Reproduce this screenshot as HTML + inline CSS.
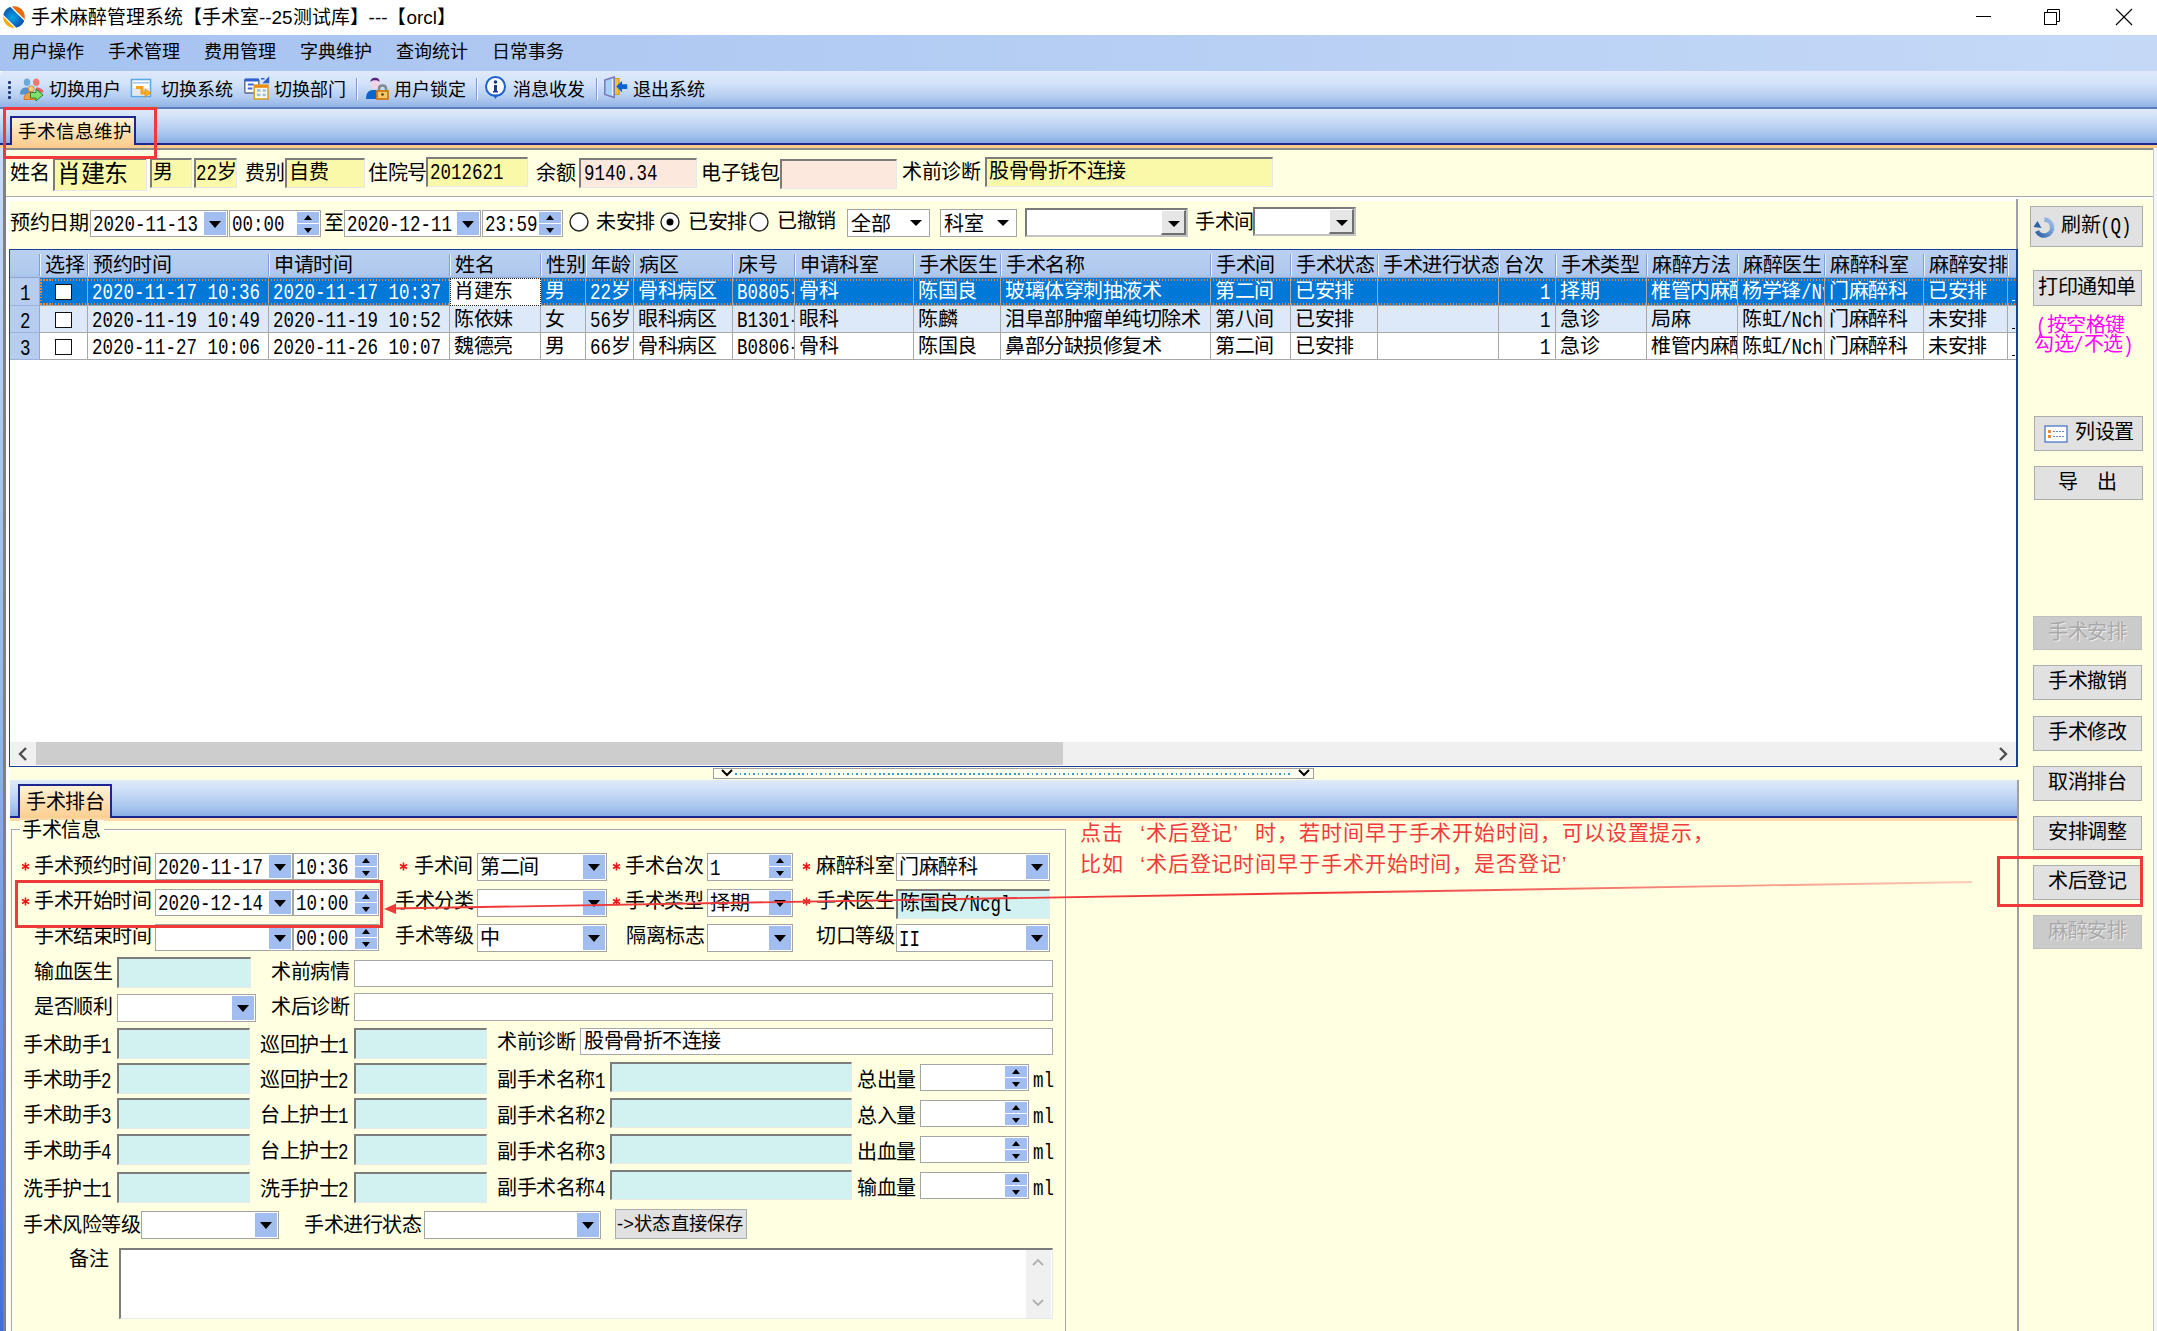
<!DOCTYPE html><html lang="zh-CN"><head><meta charset="utf-8"><style>
*{box-sizing:border-box}
html,body{margin:0;padding:0;width:2157px;height:1331px;overflow:hidden;background:#ffffe1;position:relative}
body{font-family:"Liberation Sans",sans-serif;color:#000}
div{position:absolute}
.t{font-size:20px;letter-spacing:-0.5px;line-height:20px;white-space:nowrap}
.y{line-height:22px;white-space:nowrap;font-family:"Liberation Sans",sans-serif}
b.m{display:inline-block;font-weight:normal;position:relative;height:20px;vertical-align:top;overflow:visible}
b.m i{font-style:normal;font-family:"Liberation Mono",monospace;font-size:22px;letter-spacing:0;position:absolute;left:0;top:3px;transform-origin:0 0;white-space:nowrap}
.g b.m i{top:3px}
.sk{background:#fff;border-top:2px solid #808080;border-left:2px solid #808080;border-bottom:1px solid #e3e3e3;border-right:1px solid #e3e3e3}
.fl{background:#fff;border:1px solid #a5a5a5}
.dd{background:#a2bdf0}
.tri{width:0;height:0;border-left:6px solid transparent;border-right:6px solid transparent;border-top:7px solid #000}
.btn{background:#e1e1e1;border:1px solid #adadad}
.dis{background:#cccccc;border:1px solid #bfbfbf;color:#a3a3a3}
.red{border:3px solid #f03c3c}
</style></head><body><div style="left:0px;top:0px;width:2157px;height:35px;background:#fff"></div>
<svg style="position:absolute;left:3px;top:6px" width="22" height="22" viewBox="0 0 22 22">
<defs><clipPath id="cc"><circle cx="11" cy="11" r="10.8"/></clipPath><radialGradient id="bl" cx="0.45" cy="0.5" r="0.6"><stop offset="0" stop-color="#06a6e6"/><stop offset="1" stop-color="#0a5cb8"/></radialGradient></defs>
<g clip-path="url(#cc)">
<rect x="0" y="0" width="22" height="22" fill="#fff"/>
<path d="M8 -1 L23 -1 L23 23Z" fill="#ec6a0c"/>
<path d="M-1 8 L-1 23 L16 23Z" fill="#f4ae12"/>
<path d="M2 3 L19 20" stroke="#fff" stroke-width="13"/>
<path d="M2.5 3.5 L18.5 19.5" stroke="url(#bl)" stroke-width="10.5" stroke-linecap="round"/>
</g></svg>
<div class="y" style="left:31px;top:7px;font-size:18.9px;line-height:22px">手术麻醉管理系统【手术室--25测试库】---【orcl】</div>
<div style="left:1976px;top:16px;width:15px;height:1px;background:#000"></div>
<svg style="position:absolute;left:2043px;top:8px" width="20" height="18" viewBox="0 0 20 18"><rect x="1.5" y="4.5" width="12" height="12" fill="none" stroke="#000" stroke-width="1"/><path d="M4.5 4.5 V1.5 H16.5 V13.5 H13.5" fill="none" stroke="#000" stroke-width="1"/></svg>
<svg style="position:absolute;left:2114px;top:7px" width="20" height="20" viewBox="0 0 20 20"><path d="M2 2 L18 18 M18 2 L2 18" stroke="#000" stroke-width="1.1"/></svg>
<div style="left:0px;top:35px;width:2157px;height:36px;background:linear-gradient(90deg,#a6c2f0 0%,#b3ccf3 40%,#c5d9f7 100%)"></div>
<div class="y" style="left:12px;top:41px;font-size:18px;">用户操作</div>
<div class="y" style="left:108px;top:41px;font-size:18px;">手术管理</div>
<div class="y" style="left:204px;top:41px;font-size:18px;">费用管理</div>
<div class="y" style="left:300px;top:41px;font-size:18px;">字典维护</div>
<div class="y" style="left:396px;top:41px;font-size:18px;">查询统计</div>
<div class="y" style="left:492px;top:41px;font-size:18px;">日常事务</div>
<div style="left:0px;top:71px;width:2157px;height:37px;background:linear-gradient(180deg,#dfeafb 0%,#d2e2f9 35%,#b4cdf1 70%,#8eb0e3 100%);border-top-left-radius:4px"></div>
<div style="left:0px;top:107px;width:2157px;height:2px;background:#5a7ec0"></div>
<div style="left:8px;top:81px;width:3px;height:3px;background:#243a78;border-radius:1px"></div>
<div style="left:8px;top:86px;width:3px;height:3px;background:#243a78;border-radius:1px"></div>
<div style="left:8px;top:91px;width:3px;height:3px;background:#243a78;border-radius:1px"></div>
<div style="left:8px;top:96px;width:3px;height:3px;background:#243a78;border-radius:1px"></div>
<svg style="position:absolute;left:14px;top:72px" width="40" height="32" viewBox="0 0 40 32"><path d="M6 22.5 C6 17 9 15.5 13 15.5 C16 15.5 17 17 17 19 L17 22.5Z" fill="#4f95cf"/><ellipse cx="13" cy="10.2" rx="3.2" ry="3.8" fill="#6aaad8"/><path d="M22 15.5 C26 15.5 29.5 17 29.5 20.5 L22 20.5Z" fill="#e86060"/><ellipse cx="22.2" cy="10.2" rx="3.2" ry="3.8" fill="#f07a70"/><path d="M10 27.5 C10 22 13 20.5 17.3 20.5 C21 20.5 23 22 23 27.5Z" fill="#f0a040" stroke="#d86a18" stroke-width="0.8"/><circle cx="17.3" cy="16.8" r="2.9" fill="#f8d080" stroke="#e08028" stroke-width="0.9"/><path d="M16.5 20.5 H22 V17 L29 23 L22 29 V26 H16.5Z" fill="#7ee070" stroke="#1e7a1e" stroke-width="0.9"/></svg>
<div class="y" style="left:49px;top:79px;font-size:18px;">切换用户</div>
<svg style="position:absolute;left:127px;top:72px" width="40" height="32" viewBox="0 0 40 32"><rect x="4.5" y="7.5" width="19" height="17" fill="#fff" stroke="#5aaae8" stroke-width="1.6"/><rect x="6" y="10" width="16" height="1.5" fill="#9cc8f0"/><rect x="6" y="16" width="16" height="7" fill="#e8e8ec"/><path d="M9 15.5 H15 V21 H19" fill="none" stroke="#f5a21b" stroke-width="3"/><path d="M18 17 L24 21 L18 25Z" fill="#f5b21b" stroke="#e07a10" stroke-width="0.6"/></svg>
<div class="y" style="left:161px;top:79px;font-size:18px;">切换系统</div>
<svg style="position:absolute;left:240px;top:72px" width="40" height="32" viewBox="0 0 40 32"><rect x="4.8" y="7.5" width="14" height="13.5" fill="#fff" stroke="#5a6a8a" stroke-width="1.4" rx="1"/><rect x="4.5" y="6.6" width="14.6" height="3" fill="#2f62d0" rx="1"/><rect x="7.8" y="11.5" width="6" height="2" fill="#3a6ad8"/><rect x="7.8" y="15.5" width="4.5" height="2" fill="#3a6ad8"/><path d="M21 6.8 H24.5 M28.5 6 L28.5 10.5 L24 10.5Z" stroke="#3060d0" stroke-width="1.4" fill="#3060d0"/><rect x="14.2" y="13.2" width="13.8" height="13.8" fill="#fffbe8" stroke="#d4a020" stroke-width="1.5"/><rect x="14.2" y="12.8" width="13.8" height="3" fill="#f08a10"/><rect x="16.8" y="17.2" width="3.8" height="2.6" fill="#9cc0e0"/><rect x="22.6" y="17.2" width="3.2" height="2.6" fill="#9cc0e0"/><rect x="16.8" y="21.6" width="3.8" height="2.6" fill="#9cc0e0"/><rect x="22.6" y="21.6" width="3.2" height="2.6" fill="#9cc0e0"/></svg>
<div class="y" style="left:274px;top:79px;font-size:18px;">切换部门</div>
<svg style="position:absolute;left:362px;top:72px" width="40" height="32" viewBox="0 0 40 32"><ellipse cx="13" cy="12" rx="4.3" ry="5.3" fill="#f0d4e8"/><path d="M8.5 10 C8 5 18 4 17.5 10 C16 7.5 10 7.5 8.5 10Z" fill="#5a2080"/><path d="M4 27 C4 19 8 18 12 18 L15 18 L15 27Z" fill="#0a66cc"/><path d="M17 18.5 V16.5 C17 12.5 24 12.5 24 16.5 V18.5" fill="none" stroke="#808890" stroke-width="2.4"/><rect x="15" y="19" width="11" height="8" fill="#f8c868" stroke="#d07810" stroke-width="1.8"/><circle cx="20.5" cy="22.5" r="1.3" fill="#4a3a20"/></svg>
<div class="y" style="left:394px;top:79px;font-size:18px;">用户锁定</div>
<svg style="position:absolute;left:480px;top:72px" width="40" height="32" viewBox="0 0 40 32"><circle cx="15.5" cy="14.5" r="9.5" fill="#fff" stroke="#1a62d0" stroke-width="2"/><path d="M12.5 22.5 L15.5 27 L18.5 22.5Z" fill="#1a62d0"/><circle cx="15.5" cy="10" r="1.8" fill="#1a3a90"/><rect x="14" y="13" width="3" height="7" fill="#1a3a90"/><rect x="13" y="19" width="5" height="1.5" fill="#1a3a90"/></svg>
<div class="y" style="left:513px;top:79px;font-size:18px;">消息收发</div>
<svg style="position:absolute;left:600px;top:72px" width="40" height="32" viewBox="0 0 40 32"><path d="M15 6.5 H19 V22.5 H15" fill="#f4c040" stroke="#d89a10" stroke-width="1.2"/><path d="M4.8 8 L14.2 5 V25.5 L4.8 22.5Z" fill="#a8d0fa" stroke="#7a78b8" stroke-width="1.5"/><path d="M12.5 7 V23.5" stroke="#f4f4ff" stroke-width="1.2"/><path d="M16.2 14.5 L22 9 V12.2 H27.2 V17 H22 V20.2Z" fill="#0a64d8"/></svg>
<div class="y" style="left:633px;top:79px;font-size:18px;">退出系统</div>
<div style="left:356px;top:78px;width:1px;height:22px;background:#7e9cc8"></div>
<div style="left:357px;top:78px;width:1px;height:22px;background:#f4f8fe"></div>
<div style="left:476px;top:78px;width:1px;height:22px;background:#7e9cc8"></div>
<div style="left:477px;top:78px;width:1px;height:22px;background:#f4f8fe"></div>
<div style="left:596px;top:78px;width:1px;height:22px;background:#7e9cc8"></div>
<div style="left:597px;top:78px;width:1px;height:22px;background:#f4f8fe"></div>
<div style="left:0px;top:109px;width:2157px;height:35px;background:linear-gradient(180deg,#dfeafa 0%,#d3e3f8 20%,#a9c6ee 70%,#86abe1 100%)"></div>
<div style="left:0px;top:143px;width:2157px;height:2px;background:#1c2590"></div>
<div style="left:0px;top:145px;width:2157px;height:3px;background:#fccb8e"></div>
<div style="left:4px;top:148px;width:2150px;height:2px;background:#8a8a8a"></div>
<div style="left:10px;top:116px;width:126px;height:29px;background:linear-gradient(180deg,#fff3d6 0%,#fedcaa 60%,#fccf90 100%);border:2px solid #1c2590;border-bottom:none"></div>
<div class="t" style="left:18px;top:122px;font-size:18.5px;letter-spacing:0">手术信息维护</div>
<div style="left:0px;top:148px;width:3px;height:1183px;background:linear-gradient(180deg,#c8dcf8 0%,#8fb4ec 50%,#3a72d2 100%)"></div>
<div style="left:3px;top:148px;width:3px;height:1183px;background:#808080"></div>
<div style="left:6px;top:197px;width:4px;height:1134px;background:#fff"></div>
<div style="left:2153px;top:148px;width:4px;height:1183px;background:#f4f6fa"></div>
<div style="left:2153px;top:148px;width:1px;height:1183px;background:#c8c8c8"></div>
<div style="left:6px;top:150px;width:2147px;height:46px;background:#ffffe1"></div>
<div style="left:6px;top:196px;width:2147px;height:1px;background:#a8a8a8"></div>
<div style="left:6px;top:197px;width:2147px;height:2px;background:#fff"></div>
<div style="left:6px;top:199px;width:2012px;height:2px;background:#fff"></div>
<div class="t" style="left:10px;top:163px;">姓名</div>
<div style="left:53px;top:158px;width:94px;height:33px;background:#f9f9a9;border-top:2px solid #7c7c7c;border-left:2px solid #7c7c7c;border-bottom:1px solid #e8e8e8;border-right:1px solid #e8e8e8"></div>
<div class="t" style="left:57px;top:161px;font-size:24px;letter-spacing:-0.5px;line-height:26px">肖建东</div>
<div style="left:150px;top:158px;width:42px;height:30px;background:#f9f9a9;border-top:2px solid #7c7c7c;border-left:2px solid #7c7c7c;border-bottom:1px solid #e8e8e8;border-right:1px solid #e8e8e8"></div>
<div class="t" style="left:153px;top:162px;">男</div>
<div style="left:194px;top:158px;width:43px;height:30px;background:#f9f9a9;border-top:2px solid #7c7c7c;border-left:2px solid #7c7c7c;border-bottom:1px solid #e8e8e8;border-right:1px solid #e8e8e8"></div>
<div class="t" style="left:196px;top:162px;letter-spacing:-1px"><b class="m" style="width:21.00px"><i style="transform:scaleX(0.795)">22</i></b>岁</div>
<div class="t" style="left:245px;top:163px;">费别</div>
<div style="left:285px;top:158px;width:80px;height:30px;background:#f9f9a9;border-top:2px solid #7c7c7c;border-left:2px solid #7c7c7c;border-bottom:1px solid #e8e8e8;border-right:1px solid #e8e8e8"></div>
<div class="t" style="left:289px;top:162px;">自费</div>
<div class="t" style="left:368px;top:163px;">住院号</div>
<div style="left:426px;top:157px;width:102px;height:30px;background:#f9f9a9;border-top:2px solid #7c7c7c;border-left:2px solid #7c7c7c;border-bottom:1px solid #e8e8e8;border-right:1px solid #e8e8e8"></div>
<div class="t" style="left:430px;top:161px;"><b class="m" style="width:73.50px"><i style="transform:scaleX(0.795)">2012621</i></b></div>
<div class="t" style="left:536px;top:163px;">余额</div>
<div style="left:579px;top:158px;width:118px;height:30px;background:#fde8de;border-top:2px solid #7c7c7c;border-left:2px solid #7c7c7c;border-bottom:1px solid #e8e8e8;border-right:1px solid #e8e8e8"></div>
<div class="t" style="left:584px;top:162px;"><b class="m" style="width:73.50px"><i style="transform:scaleX(0.795)">9140.34</i></b></div>
<div class="t" style="left:701px;top:163px;">电子钱包</div>
<div style="left:780px;top:159px;width:117px;height:30px;background:#fde8de;border-top:2px solid #7c7c7c;border-left:2px solid #7c7c7c;border-bottom:1px solid #e8e8e8;border-right:1px solid #e8e8e8"></div>
<div class="t" style="left:902px;top:162px;">术前诊断</div>
<div style="left:985px;top:157px;width:288px;height:30px;background:#f9f9a9;border-top:2px solid #7c7c7c;border-left:2px solid #7c7c7c;border-bottom:1px solid #e8e8e8;border-right:1px solid #e8e8e8"></div>
<div class="t" style="left:989px;top:161px;">股骨骨折不连接</div>
<div style="left:10px;top:201px;width:2007px;height:48px;background:#ffffe1"></div>
<div style="left:2016px;top:199px;width:2px;height:50px;background:#a0a0a0"></div>
<div class="t" style="left:10px;top:213px;">预约日期</div>
<div style="left:90px;top:210px;width:138px;height:27px;background:#fff;border:1px solid #a5a5a5"></div>
<div class="t" style="left:93px;top:213px;"><b class="m" style="width:105.00px"><i style="transform:scaleX(0.795)">2020-11-13</i></b></div>
<div style="left:204px;top:212px;width:22px;height:23px;background:#a2bdf0"></div>
<div style="left:209px;top:221px;width:12px;height:7px;"><div class="tri"></div></div>
<div style="left:229px;top:210px;width:92px;height:27px;background:#fff;border:1px solid #a5a5a5"></div>
<div class="t" style="left:232px;top:213px;"><b class="m" style="width:52.50px"><i style="transform:scaleX(0.795)">00:00</i></b></div>
<div style="left:297px;top:212px;width:22px;height:11px;background:#a2bdf0"></div>
<div style="left:297px;top:224px;width:22px;height:11px;background:#a2bdf0"></div>
<svg style="position:absolute;left:297px;top:212px" width="22" height="23"><path d="M7 8 L11 3 L15 8Z" fill="#000"/><path d="M7 16 L11 21 L15 16Z" fill="#000"/></svg>
<div class="t" style="left:324px;top:213px;">至</div>
<div style="left:344px;top:210px;width:137px;height:27px;background:#fff;border:1px solid #a5a5a5"></div>
<div class="t" style="left:347px;top:213px;"><b class="m" style="width:105.00px"><i style="transform:scaleX(0.795)">2020-12-11</i></b></div>
<div style="left:457px;top:212px;width:22px;height:23px;background:#a2bdf0"></div>
<div style="left:462px;top:221px;width:12px;height:7px;"><div class="tri"></div></div>
<div style="left:482px;top:210px;width:81px;height:27px;background:#fff;border:1px solid #a5a5a5"></div>
<div class="t" style="left:485px;top:213px;"><b class="m" style="width:52.50px"><i style="transform:scaleX(0.795)">23:59</i></b></div>
<div style="left:539px;top:212px;width:22px;height:11px;background:#a2bdf0"></div>
<div style="left:539px;top:224px;width:22px;height:11px;background:#a2bdf0"></div>
<svg style="position:absolute;left:539px;top:212px" width="22" height="23"><path d="M7 8 L11 3 L15 8Z" fill="#000"/><path d="M7 16 L11 21 L15 16Z" fill="#000"/></svg>
<svg style="position:absolute;left:568px;top:211px" width="22" height="22"><circle cx="11" cy="11" r="9" fill="#fff" stroke="#222" stroke-width="1.4"/></svg>
<div class="t" style="left:596px;top:212px;">未安排</div>
<svg style="position:absolute;left:659px;top:211px" width="22" height="22"><circle cx="11" cy="11" r="9" fill="#fff" stroke="#222" stroke-width="1.4"/><circle cx="11" cy="11" r="3.5" fill="#000"/></svg>
<div class="t" style="left:688px;top:212px;">已安排</div>
<svg style="position:absolute;left:748px;top:211px" width="22" height="22"><circle cx="11" cy="11" r="9" fill="#fff" stroke="#222" stroke-width="1.4"/></svg>
<div class="t" style="left:777px;top:211px;">已撤销</div>
<div style="left:847px;top:209px;width:83px;height:28px;background:#fff;border:1px solid #a5a5a5"></div>
<div class="t" style="left:851px;top:214px;">全部</div>
<svg style="position:absolute;left:909px;top:219px" width="14" height="8"><path d="M1 1 L13 1 L7 7Z" fill="#000"/></svg>
<div style="left:940px;top:209px;width:77px;height:28px;background:#fff;border:1px solid #a5a5a5"></div>
<div class="t" style="left:944px;top:214px;">科室</div>
<svg style="position:absolute;left:996px;top:219px" width="14" height="8"><path d="M1 1 L13 1 L7 7Z" fill="#000"/></svg>
<div style="left:1025px;top:208px;width:163px;height:29px;background:#fff;border-top:2px solid #7a7a7a;border-left:2px solid #7a7a7a;border-bottom:2px solid #c4c4c4;border-right:2px solid #c4c4c4"></div>
<div style="left:1161px;top:210px;width:25px;height:25px;background:#e6e6e6;border-top:1px solid #fff;border-left:1px solid #fff;border-right:2px solid #707070;border-bottom:2px solid #707070"></div>
<svg style="position:absolute;left:1167px;top:220px" width="14" height="8"><path d="M1 1 L13 1 L7 7Z" fill="#000"/></svg>
<div class="t" style="left:1195px;top:212px;">手术间</div>
<div style="left:1253px;top:207px;width:103px;height:29px;background:#fff;border-top:2px solid #7a7a7a;border-left:2px solid #7a7a7a;border-bottom:2px solid #c4c4c4;border-right:2px solid #c4c4c4"></div>
<div style="left:1329px;top:209px;width:25px;height:25px;background:#e6e6e6;border-top:1px solid #fff;border-left:1px solid #fff;border-right:2px solid #707070;border-bottom:2px solid #707070"></div>
<svg style="position:absolute;left:1335px;top:219px" width="14" height="8"><path d="M1 1 L13 1 L7 7Z" fill="#000"/></svg>
<div style="left:9px;top:249px;width:2009px;height:518px;background:#fff;border:1px solid #1b3d9c;border-right-width:2px;border-top-width:2px"></div>
<div style="left:10px;top:250px;width:2006px;height:28px;background:linear-gradient(180deg,#b9d0f0 0%,#b0c9ee 80%,#a6c0e8 100%)"></div>
<div style="left:10px;top:277px;width:2006px;height:1px;background:#8fa8d0"></div>
<div style="left:39px;top:254px;width:1px;height:22px;background:#7f9ed6"></div>
<div style="left:40px;top:254px;width:1px;height:22px;background:#eef4fd"></div>
<div style="left:87px;top:254px;width:1px;height:22px;background:#7f9ed6"></div>
<div style="left:88px;top:254px;width:1px;height:22px;background:#eef4fd"></div>
<div style="left:268px;top:254px;width:1px;height:22px;background:#7f9ed6"></div>
<div style="left:269px;top:254px;width:1px;height:22px;background:#eef4fd"></div>
<div style="left:449px;top:254px;width:1px;height:22px;background:#7f9ed6"></div>
<div style="left:450px;top:254px;width:1px;height:22px;background:#eef4fd"></div>
<div style="left:540px;top:254px;width:1px;height:22px;background:#7f9ed6"></div>
<div style="left:541px;top:254px;width:1px;height:22px;background:#eef4fd"></div>
<div style="left:585px;top:254px;width:1px;height:22px;background:#7f9ed6"></div>
<div style="left:586px;top:254px;width:1px;height:22px;background:#eef4fd"></div>
<div style="left:633px;top:254px;width:1px;height:22px;background:#7f9ed6"></div>
<div style="left:634px;top:254px;width:1px;height:22px;background:#eef4fd"></div>
<div style="left:732px;top:254px;width:1px;height:22px;background:#7f9ed6"></div>
<div style="left:733px;top:254px;width:1px;height:22px;background:#eef4fd"></div>
<div style="left:794px;top:254px;width:1px;height:22px;background:#7f9ed6"></div>
<div style="left:795px;top:254px;width:1px;height:22px;background:#eef4fd"></div>
<div style="left:913px;top:254px;width:1px;height:22px;background:#7f9ed6"></div>
<div style="left:914px;top:254px;width:1px;height:22px;background:#eef4fd"></div>
<div style="left:1000px;top:254px;width:1px;height:22px;background:#7f9ed6"></div>
<div style="left:1001px;top:254px;width:1px;height:22px;background:#eef4fd"></div>
<div style="left:1210px;top:254px;width:1px;height:22px;background:#7f9ed6"></div>
<div style="left:1211px;top:254px;width:1px;height:22px;background:#eef4fd"></div>
<div style="left:1290px;top:254px;width:1px;height:22px;background:#7f9ed6"></div>
<div style="left:1291px;top:254px;width:1px;height:22px;background:#eef4fd"></div>
<div style="left:1377px;top:254px;width:1px;height:22px;background:#7f9ed6"></div>
<div style="left:1378px;top:254px;width:1px;height:22px;background:#eef4fd"></div>
<div style="left:1498px;top:254px;width:1px;height:22px;background:#7f9ed6"></div>
<div style="left:1499px;top:254px;width:1px;height:22px;background:#eef4fd"></div>
<div style="left:1555px;top:254px;width:1px;height:22px;background:#7f9ed6"></div>
<div style="left:1556px;top:254px;width:1px;height:22px;background:#eef4fd"></div>
<div style="left:1646px;top:254px;width:1px;height:22px;background:#7f9ed6"></div>
<div style="left:1647px;top:254px;width:1px;height:22px;background:#eef4fd"></div>
<div style="left:1737px;top:254px;width:1px;height:22px;background:#7f9ed6"></div>
<div style="left:1738px;top:254px;width:1px;height:22px;background:#eef4fd"></div>
<div style="left:1824px;top:254px;width:1px;height:22px;background:#7f9ed6"></div>
<div style="left:1825px;top:254px;width:1px;height:22px;background:#eef4fd"></div>
<div style="left:1923px;top:254px;width:1px;height:22px;background:#7f9ed6"></div>
<div style="left:1924px;top:254px;width:1px;height:22px;background:#eef4fd"></div>
<div style="left:2007px;top:254px;width:1px;height:22px;background:#7f9ed6"></div>
<div style="left:2008px;top:254px;width:1px;height:22px;background:#eef4fd"></div>
<div class="t" style="left:45px;top:255px;width:42px;overflow:hidden">选择</div>
<div class="t" style="left:93px;top:255px;width:175px;overflow:hidden">预约时间</div>
<div class="t" style="left:274px;top:255px;width:175px;overflow:hidden">申请时间</div>
<div class="t" style="left:455px;top:255px;width:85px;overflow:hidden">姓名</div>
<div class="t" style="left:546px;top:255px;width:39px;overflow:hidden">性别</div>
<div class="t" style="left:591px;top:255px;width:42px;overflow:hidden">年龄</div>
<div class="t" style="left:639px;top:255px;width:93px;overflow:hidden">病区</div>
<div class="t" style="left:738px;top:255px;width:56px;overflow:hidden">床号</div>
<div class="t" style="left:800px;top:255px;width:113px;overflow:hidden">申请科室</div>
<div class="t" style="left:919px;top:255px;width:81px;overflow:hidden">手术医生</div>
<div class="t" style="left:1006px;top:255px;width:204px;overflow:hidden">手术名称</div>
<div class="t" style="left:1216px;top:255px;width:74px;overflow:hidden">手术间</div>
<div class="t" style="left:1296px;top:255px;width:81px;overflow:hidden">手术状态</div>
<div class="t" style="left:1383px;top:255px;width:115px;overflow:hidden">手术进行状态</div>
<div class="t" style="left:1504px;top:255px;width:51px;overflow:hidden">台次</div>
<div class="t" style="left:1561px;top:255px;width:85px;overflow:hidden">手术类型</div>
<div class="t" style="left:1652px;top:255px;width:85px;overflow:hidden">麻醉方法</div>
<div class="t" style="left:1743px;top:255px;width:81px;overflow:hidden">麻醉医生</div>
<div class="t" style="left:1830px;top:255px;width:93px;overflow:hidden">麻醉科室</div>
<div class="t" style="left:1929px;top:255px;width:78px;overflow:hidden">麻醉安排</div>
<div style="left:10px;top:278px;width:30px;height:28px;background:#b6cdf0;border-bottom:1px solid #9ab2dc;border-right:1px solid #8ea9d2"></div>
<div class="t" style="left:20px;top:282px;"><b class="m" style="width:10.50px"><i style="transform:scaleX(0.795)">1</i></b></div>
<div style="left:40px;top:278px;width:1976px;height:28px;background:#0078d7"></div>
<div style="left:40px;top:305px;width:1976px;height:1px;background:#a8a8a8"></div>
<div style="left:87px;top:278px;width:1px;height:28px;background:#a8a8a8"></div>
<div style="left:268px;top:278px;width:1px;height:28px;background:#a8a8a8"></div>
<div style="left:449px;top:278px;width:1px;height:28px;background:#a8a8a8"></div>
<div style="left:540px;top:278px;width:1px;height:28px;background:#a8a8a8"></div>
<div style="left:585px;top:278px;width:1px;height:28px;background:#a8a8a8"></div>
<div style="left:633px;top:278px;width:1px;height:28px;background:#a8a8a8"></div>
<div style="left:732px;top:278px;width:1px;height:28px;background:#a8a8a8"></div>
<div style="left:794px;top:278px;width:1px;height:28px;background:#a8a8a8"></div>
<div style="left:913px;top:278px;width:1px;height:28px;background:#a8a8a8"></div>
<div style="left:1000px;top:278px;width:1px;height:28px;background:#a8a8a8"></div>
<div style="left:1210px;top:278px;width:1px;height:28px;background:#a8a8a8"></div>
<div style="left:1290px;top:278px;width:1px;height:28px;background:#a8a8a8"></div>
<div style="left:1377px;top:278px;width:1px;height:28px;background:#a8a8a8"></div>
<div style="left:1498px;top:278px;width:1px;height:28px;background:#a8a8a8"></div>
<div style="left:1555px;top:278px;width:1px;height:28px;background:#a8a8a8"></div>
<div style="left:1646px;top:278px;width:1px;height:28px;background:#a8a8a8"></div>
<div style="left:1737px;top:278px;width:1px;height:28px;background:#a8a8a8"></div>
<div style="left:1824px;top:278px;width:1px;height:28px;background:#a8a8a8"></div>
<div style="left:1923px;top:278px;width:1px;height:28px;background:#a8a8a8"></div>
<div style="left:2007px;top:278px;width:1px;height:28px;background:#a8a8a8"></div>
<div style="left:40px;top:279px;width:1976px;height:2px;background:repeating-linear-gradient(90deg,#e8863a 0 1.5px,transparent 1.5px 3px)"></div>
<div style="left:40px;top:303px;width:1976px;height:2px;background:repeating-linear-gradient(90deg,#e8863a 0 1.5px,transparent 1.5px 3px)"></div>
<div style="left:40px;top:279px;width:2px;height:25px;background:repeating-linear-gradient(180deg,#e8863a 0 1.5px,transparent 1.5px 3px)"></div>
<div style="left:450px;top:278px;width:91px;height:28px;background:#fff;border:1px dotted #222"></div>
<div style="left:55px;top:284px;width:17px;height:16px;background:#fff;border:1.5px solid #111"></div>
<div class="t g" style="left:92px;top:281px;width:176px;overflow:hidden;color:#fff"><b class="m" style="width:168.00px"><i style="transform:scaleX(0.795)">2020-11-17&nbsp;10:36</i></b></div>
<div class="t g" style="left:273px;top:281px;width:176px;overflow:hidden;color:#fff"><b class="m" style="width:168.00px"><i style="transform:scaleX(0.795)">2020-11-17&nbsp;10:37</i></b></div>
<div class="t g" style="left:454px;top:281px;width:86px;overflow:hidden;color:#000">肖建东</div>
<div class="t g" style="left:545px;top:281px;width:40px;overflow:hidden;color:#fff">男</div>
<div class="t g" style="left:590px;top:281px;width:43px;overflow:hidden;color:#fff"><b class="m" style="width:21.00px"><i style="transform:scaleX(0.795)">22</i></b>岁</div>
<div class="t g" style="left:638px;top:281px;width:94px;overflow:hidden;color:#fff">骨科病区</div>
<div class="t g" style="left:737px;top:281px;width:57px;overflow:hidden;color:#fff"><b class="m" style="width:52.50px"><i style="transform:scaleX(0.795)">B0805</i></b>·</div>
<div class="t g" style="left:799px;top:281px;width:114px;overflow:hidden;color:#fff">骨科</div>
<div class="t g" style="left:918px;top:281px;width:82px;overflow:hidden;color:#fff">陈国良</div>
<div class="t g" style="left:1005px;top:281px;width:205px;overflow:hidden;color:#fff">玻璃体穿刺抽液术</div>
<div class="t g" style="left:1215px;top:281px;width:75px;overflow:hidden;color:#fff">第二间</div>
<div class="t g" style="left:1295px;top:281px;width:82px;overflow:hidden;color:#fff">已安排</div>
<div class="t g" style="left:1499px;top:281px;width:51px;text-align:right;color:#fff"><b class="m" style="width:10.50px"><i style="transform:scaleX(0.795)">1</i></b></div>
<div class="t g" style="left:1560px;top:281px;width:86px;overflow:hidden;color:#fff">择期</div>
<div class="t g" style="left:1651px;top:281px;width:86px;overflow:hidden;color:#fff">椎管内麻醉</div>
<div class="t g" style="left:1742px;top:281px;width:82px;overflow:hidden;color:#fff">杨学锋<b class="m" style="width:52.50px"><i style="transform:scaleX(0.795)">/Nyxf</i></b></div>
<div class="t g" style="left:1829px;top:281px;width:94px;overflow:hidden;color:#fff">门麻醉科</div>
<div class="t g" style="left:1928px;top:281px;width:79px;overflow:hidden;color:#fff">已安排</div>
<div class="t g" style="left:2012px;top:281px;width:3px;overflow:hidden;color:#fff"><b class="m" style="width:10.50px"><i style="transform:scaleX(0.795)">_</i></b></div>
<div style="left:10px;top:306px;width:30px;height:27px;background:#b6cdf0;border-bottom:1px solid #9ab2dc;border-right:1px solid #8ea9d2"></div>
<div class="t" style="left:20px;top:310px;"><b class="m" style="width:10.50px"><i style="transform:scaleX(0.795)">2</i></b></div>
<div style="left:40px;top:306px;width:1976px;height:27px;background:#dde8f8"></div>
<div style="left:40px;top:332px;width:1976px;height:1px;background:#a8a8a8"></div>
<div style="left:87px;top:306px;width:1px;height:27px;background:#a8a8a8"></div>
<div style="left:268px;top:306px;width:1px;height:27px;background:#a8a8a8"></div>
<div style="left:449px;top:306px;width:1px;height:27px;background:#a8a8a8"></div>
<div style="left:540px;top:306px;width:1px;height:27px;background:#a8a8a8"></div>
<div style="left:585px;top:306px;width:1px;height:27px;background:#a8a8a8"></div>
<div style="left:633px;top:306px;width:1px;height:27px;background:#a8a8a8"></div>
<div style="left:732px;top:306px;width:1px;height:27px;background:#a8a8a8"></div>
<div style="left:794px;top:306px;width:1px;height:27px;background:#a8a8a8"></div>
<div style="left:913px;top:306px;width:1px;height:27px;background:#a8a8a8"></div>
<div style="left:1000px;top:306px;width:1px;height:27px;background:#a8a8a8"></div>
<div style="left:1210px;top:306px;width:1px;height:27px;background:#a8a8a8"></div>
<div style="left:1290px;top:306px;width:1px;height:27px;background:#a8a8a8"></div>
<div style="left:1377px;top:306px;width:1px;height:27px;background:#a8a8a8"></div>
<div style="left:1498px;top:306px;width:1px;height:27px;background:#a8a8a8"></div>
<div style="left:1555px;top:306px;width:1px;height:27px;background:#a8a8a8"></div>
<div style="left:1646px;top:306px;width:1px;height:27px;background:#a8a8a8"></div>
<div style="left:1737px;top:306px;width:1px;height:27px;background:#a8a8a8"></div>
<div style="left:1824px;top:306px;width:1px;height:27px;background:#a8a8a8"></div>
<div style="left:1923px;top:306px;width:1px;height:27px;background:#a8a8a8"></div>
<div style="left:2007px;top:306px;width:1px;height:27px;background:#a8a8a8"></div>
<div style="left:55px;top:312px;width:17px;height:16px;background:#fff;border:1.5px solid #111"></div>
<div class="t g" style="left:92px;top:309px;width:176px;overflow:hidden;color:#000"><b class="m" style="width:168.00px"><i style="transform:scaleX(0.795)">2020-11-19&nbsp;10:49</i></b></div>
<div class="t g" style="left:273px;top:309px;width:176px;overflow:hidden;color:#000"><b class="m" style="width:168.00px"><i style="transform:scaleX(0.795)">2020-11-19&nbsp;10:52</i></b></div>
<div class="t g" style="left:454px;top:309px;width:86px;overflow:hidden;color:#000">陈依妹</div>
<div class="t g" style="left:545px;top:309px;width:40px;overflow:hidden;color:#000">女</div>
<div class="t g" style="left:590px;top:309px;width:43px;overflow:hidden;color:#000"><b class="m" style="width:21.00px"><i style="transform:scaleX(0.795)">56</i></b>岁</div>
<div class="t g" style="left:638px;top:309px;width:94px;overflow:hidden;color:#000">眼科病区</div>
<div class="t g" style="left:737px;top:309px;width:57px;overflow:hidden;color:#000"><b class="m" style="width:52.50px"><i style="transform:scaleX(0.795)">B1301</i></b>·</div>
<div class="t g" style="left:799px;top:309px;width:114px;overflow:hidden;color:#000">眼科</div>
<div class="t g" style="left:918px;top:309px;width:82px;overflow:hidden;color:#000">陈麟</div>
<div class="t g" style="left:1005px;top:309px;width:205px;overflow:hidden;color:#000">泪阜部肿瘤单纯切除术</div>
<div class="t g" style="left:1215px;top:309px;width:75px;overflow:hidden;color:#000">第八间</div>
<div class="t g" style="left:1295px;top:309px;width:82px;overflow:hidden;color:#000">已安排</div>
<div class="t g" style="left:1499px;top:309px;width:51px;text-align:right;color:#000"><b class="m" style="width:10.50px"><i style="transform:scaleX(0.795)">1</i></b></div>
<div class="t g" style="left:1560px;top:309px;width:86px;overflow:hidden;color:#000">急诊</div>
<div class="t g" style="left:1651px;top:309px;width:86px;overflow:hidden;color:#000">局麻</div>
<div class="t g" style="left:1742px;top:309px;width:82px;overflow:hidden;color:#000">陈虹<b class="m" style="width:42.00px"><i style="transform:scaleX(0.795)">/Nch</i></b></div>
<div class="t g" style="left:1829px;top:309px;width:94px;overflow:hidden;color:#000">门麻醉科</div>
<div class="t g" style="left:1928px;top:309px;width:79px;overflow:hidden;color:#000">未安排</div>
<div class="t g" style="left:2012px;top:309px;width:3px;overflow:hidden;color:#000"><b class="m" style="width:10.50px"><i style="transform:scaleX(0.795)">_</i></b></div>
<div style="left:10px;top:333px;width:30px;height:27px;background:#b6cdf0;border-bottom:1px solid #9ab2dc;border-right:1px solid #8ea9d2"></div>
<div class="t" style="left:20px;top:337px;"><b class="m" style="width:10.50px"><i style="transform:scaleX(0.795)">3</i></b></div>
<div style="left:40px;top:333px;width:1976px;height:27px;background:#ffffff"></div>
<div style="left:40px;top:359px;width:1976px;height:1px;background:#a8a8a8"></div>
<div style="left:87px;top:333px;width:1px;height:27px;background:#a8a8a8"></div>
<div style="left:268px;top:333px;width:1px;height:27px;background:#a8a8a8"></div>
<div style="left:449px;top:333px;width:1px;height:27px;background:#a8a8a8"></div>
<div style="left:540px;top:333px;width:1px;height:27px;background:#a8a8a8"></div>
<div style="left:585px;top:333px;width:1px;height:27px;background:#a8a8a8"></div>
<div style="left:633px;top:333px;width:1px;height:27px;background:#a8a8a8"></div>
<div style="left:732px;top:333px;width:1px;height:27px;background:#a8a8a8"></div>
<div style="left:794px;top:333px;width:1px;height:27px;background:#a8a8a8"></div>
<div style="left:913px;top:333px;width:1px;height:27px;background:#a8a8a8"></div>
<div style="left:1000px;top:333px;width:1px;height:27px;background:#a8a8a8"></div>
<div style="left:1210px;top:333px;width:1px;height:27px;background:#a8a8a8"></div>
<div style="left:1290px;top:333px;width:1px;height:27px;background:#a8a8a8"></div>
<div style="left:1377px;top:333px;width:1px;height:27px;background:#a8a8a8"></div>
<div style="left:1498px;top:333px;width:1px;height:27px;background:#a8a8a8"></div>
<div style="left:1555px;top:333px;width:1px;height:27px;background:#a8a8a8"></div>
<div style="left:1646px;top:333px;width:1px;height:27px;background:#a8a8a8"></div>
<div style="left:1737px;top:333px;width:1px;height:27px;background:#a8a8a8"></div>
<div style="left:1824px;top:333px;width:1px;height:27px;background:#a8a8a8"></div>
<div style="left:1923px;top:333px;width:1px;height:27px;background:#a8a8a8"></div>
<div style="left:2007px;top:333px;width:1px;height:27px;background:#a8a8a8"></div>
<div style="left:55px;top:339px;width:17px;height:16px;background:#fff;border:1.5px solid #111"></div>
<div class="t g" style="left:92px;top:336px;width:176px;overflow:hidden;color:#000"><b class="m" style="width:168.00px"><i style="transform:scaleX(0.795)">2020-11-27&nbsp;10:06</i></b></div>
<div class="t g" style="left:273px;top:336px;width:176px;overflow:hidden;color:#000"><b class="m" style="width:168.00px"><i style="transform:scaleX(0.795)">2020-11-26&nbsp;10:07</i></b></div>
<div class="t g" style="left:454px;top:336px;width:86px;overflow:hidden;color:#000">魏德亮</div>
<div class="t g" style="left:545px;top:336px;width:40px;overflow:hidden;color:#000">男</div>
<div class="t g" style="left:590px;top:336px;width:43px;overflow:hidden;color:#000"><b class="m" style="width:21.00px"><i style="transform:scaleX(0.795)">66</i></b>岁</div>
<div class="t g" style="left:638px;top:336px;width:94px;overflow:hidden;color:#000">骨科病区</div>
<div class="t g" style="left:737px;top:336px;width:57px;overflow:hidden;color:#000"><b class="m" style="width:52.50px"><i style="transform:scaleX(0.795)">B0806</i></b>·</div>
<div class="t g" style="left:799px;top:336px;width:114px;overflow:hidden;color:#000">骨科</div>
<div class="t g" style="left:918px;top:336px;width:82px;overflow:hidden;color:#000">陈国良</div>
<div class="t g" style="left:1005px;top:336px;width:205px;overflow:hidden;color:#000">鼻部分缺损修复术</div>
<div class="t g" style="left:1215px;top:336px;width:75px;overflow:hidden;color:#000">第二间</div>
<div class="t g" style="left:1295px;top:336px;width:82px;overflow:hidden;color:#000">已安排</div>
<div class="t g" style="left:1499px;top:336px;width:51px;text-align:right;color:#000"><b class="m" style="width:10.50px"><i style="transform:scaleX(0.795)">1</i></b></div>
<div class="t g" style="left:1560px;top:336px;width:86px;overflow:hidden;color:#000">急诊</div>
<div class="t g" style="left:1651px;top:336px;width:86px;overflow:hidden;color:#000">椎管内麻醉</div>
<div class="t g" style="left:1742px;top:336px;width:82px;overflow:hidden;color:#000">陈虹<b class="m" style="width:42.00px"><i style="transform:scaleX(0.795)">/Nch</i></b></div>
<div class="t g" style="left:1829px;top:336px;width:94px;overflow:hidden;color:#000">门麻醉科</div>
<div class="t g" style="left:1928px;top:336px;width:79px;overflow:hidden;color:#000">未安排</div>
<div class="t g" style="left:2012px;top:336px;width:3px;overflow:hidden;color:#000"><b class="m" style="width:10.50px"><i style="transform:scaleX(0.795)">_</i></b></div>
<div style="left:10px;top:742px;width:2006px;height:23px;background:#f0f0f0"></div>
<div style="left:36px;top:742px;width:1027px;height:23px;background:#cdcdcd"></div>
<svg style="position:absolute;left:16px;top:746px" width="14" height="16"><path d="M10 2 L4 8 L10 14" fill="none" stroke="#505050" stroke-width="2.4"/></svg>
<svg style="position:absolute;left:1996px;top:746px" width="14" height="16"><path d="M4 2 L10 8 L4 14" fill="none" stroke="#505050" stroke-width="2.4"/></svg>
<div style="left:713px;top:768px;width:601px;height:11px;background:#fffff0;border:1px solid #a0a0a0"></div>
<div style="left:735px;top:773px;width:555px;height:2px;background:repeating-linear-gradient(90deg,#3a9ad0 0 1.5px,transparent 1.5px 4.5px)"></div>
<svg style="position:absolute;left:720px;top:768px" width="14" height="10"><path d="M2 2 L7 7 L12 2" fill="none" stroke="#000" stroke-width="2"/></svg>
<svg style="position:absolute;left:1297px;top:768px" width="14" height="10"><path d="M2 2 L7 7 L12 2" fill="none" stroke="#000" stroke-width="2"/></svg>
<div style="left:2018px;top:199px;width:135px;height:1132px;background:#ffffe1"></div>
<div style="left:2017px;top:780px;width:2px;height:551px;background:#a0a0a0"></div>
<div style="left:2030px;top:206px;width:113px;height:41px;background:#e1e1e1;border:1px solid #adadad"></div>
<div class="t" style="left:2061px;top:215px;">刷新<b class="m" style="width:31.50px"><i style="transform:scaleX(0.795)">(Q)</i></b></div>
<svg style="position:absolute;left:2032px;top:216px" width="24" height="24" viewBox="0 0 24 24"><defs><linearGradient id="rf" x1="0" y1="1" x2="1" y2="0"><stop offset="0" stop-color="#2a62a8"/><stop offset="1" stop-color="#a8c4ea"/></linearGradient></defs><path d="M12.5 3.5 A8 8 0 1 1 5 15" fill="none" stroke="url(#rf)" stroke-width="4.5"/><path d="M1.5 11 L5.5 5 L9.5 12Z" fill="#2a62a8"/></svg>
<div style="left:2033px;top:270px;width:109px;height:36px;background:#e1e1e1;border:1px solid #adadad"></div>
<div class="t" style="left:2038px;top:277px;">打印通知单</div>
<div class="t" style="left:2036px;top:316px;color:#ff00ff;line-height:18px"><b class="m" style="width:10.50px"><i style="transform:scaleX(0.795)">(</i></b>按空格键</div>
<div class="t" style="left:2034px;top:335px;color:#ff00ff;line-height:18px">勾选<b class="m" style="width:10.50px"><i style="transform:scaleX(0.795)">/</i></b>不选<b class="m" style="width:10.50px"><i style="transform:scaleX(0.795)">)</i></b></div>
<div style="left:2034px;top:416px;width:109px;height:35px;background:#e1e1e1;border:1px solid #adadad"></div>
<div class="t" style="left:2075px;top:422px;">列设置</div>
<svg style="position:absolute;left:2044px;top:424px" width="24" height="20"><rect x="1" y="2" width="22" height="16" fill="#fff" stroke="#4a78c8" stroke-width="1.3"/><rect x="4" y="6" width="3" height="3" fill="#f08a30"/><rect x="4" y="11" width="3" height="3" fill="#f08a30"/><path d="M9 7.5 H20 M9 12.5 H20" stroke="#6a88c0" stroke-width="1" stroke-dasharray="2 1"/></svg>
<div style="left:2034px;top:466px;width:109px;height:34px;background:#e1e1e1;border:1px solid #adadad"></div>
<div class="t" style="left:2058px;top:472px;">导　出</div>
<div style="left:2033px;top:616px;width:109px;height:34px;background:#cbcbcb;border:1px solid #c0c0c0"></div>
<div class="t" style="left:2048px;top:622px;color:#a9a9a9;text-shadow:1px 1px 0 #ececec">手术安排</div>
<div style="left:2033px;top:665px;width:109px;height:35px;background:#e1e1e1;border:1px solid #adadad"></div>
<div class="t" style="left:2048px;top:671px;">手术撤销</div>
<div style="left:2033px;top:716px;width:109px;height:35px;background:#e1e1e1;border:1px solid #adadad"></div>
<div class="t" style="left:2048px;top:722px;">手术修改</div>
<div style="left:2033px;top:766px;width:109px;height:35px;background:#e1e1e1;border:1px solid #adadad"></div>
<div class="t" style="left:2048px;top:772px;">取消排台</div>
<div style="left:2033px;top:816px;width:109px;height:34px;background:#e1e1e1;border:1px solid #adadad"></div>
<div class="t" style="left:2048px;top:822px;">安排调整</div>
<div style="left:2033px;top:865px;width:109px;height:35px;background:#e1e1e1;border:1px solid #adadad"></div>
<div class="t" style="left:2048px;top:871px;">术后登记</div>
<div style="left:2033px;top:915px;width:109px;height:34px;background:#cbcbcb;border:1px solid #c0c0c0"></div>
<div class="t" style="left:2048px;top:921px;color:#a9a9a9;text-shadow:1px 1px 0 #ececec">麻醉安排</div>
<div style="left:10px;top:780px;width:2007px;height:38px;background:linear-gradient(180deg,#dfeafa 0%,#d3e3f8 20%,#a9c6ee 70%,#86abe1 100%)"></div>
<div style="left:10px;top:816px;width:2007px;height:2px;background:#1c2590"></div>
<div style="left:10px;top:818px;width:2007px;height:3px;background:#fdd9a8"></div>
<div style="left:18px;top:784px;width:94px;height:34px;background:linear-gradient(180deg,#fff3d6 0%,#fedcaa 60%,#fccf90 100%);border:2px solid #1c2590;border-bottom:none"></div>
<div class="t" style="left:26px;top:792px;">手术排台</div>
<div style="left:11px;top:829px;width:1055px;height:510px;border:1px solid #a8a8a8;border-right-color:#a8a8a8;box-shadow:inset 1px 1px 0 #fff"></div>
<div style="left:20px;top:820px;width:84px;height:20px;background:#ffffe1"></div>
<div class="t" style="left:22px;top:820px;">手术信息</div>
<svg style="position:absolute;left:21px;top:862px" width="9" height="9" viewBox="0 0 9 9"><path d="M4.5 0.5 V8.5 M1 2.5 L8 6.5 M8 2.5 L1 6.5" stroke="#f01818" stroke-width="1.6"/></svg>
<div class="t" style="left:34px;top:856px;">手术预约时间</div>
<div style="left:155px;top:853px;width:138px;height:27px;background:#fff;border:1px solid #a5a5a5"></div>
<div class="t" style="left:158px;top:856px;"><b class="m" style="width:105.00px"><i style="transform:scaleX(0.795)">2020-11-17</i></b></div>
<div style="left:269px;top:855px;width:22px;height:23px;background:#a2bdf0"></div>
<div style="left:274px;top:864px;width:12px;height:7px;"><div class="tri"></div></div>
<div style="left:293px;top:853px;width:86px;height:27px;background:#fff;border:1px solid #a5a5a5"></div>
<div class="t" style="left:296px;top:856px;"><b class="m" style="width:52.50px"><i style="transform:scaleX(0.795)">10:36</i></b></div>
<div style="left:355px;top:855px;width:22px;height:11px;background:#a2bdf0"></div>
<div style="left:355px;top:867px;width:22px;height:11px;background:#a2bdf0"></div>
<svg style="position:absolute;left:355px;top:855px" width="22" height="23"><path d="M7 8 L11 3 L15 8Z" fill="#000"/><path d="M7 16 L11 21 L15 16Z" fill="#000"/></svg>
<svg style="position:absolute;left:399px;top:862px" width="9" height="9" viewBox="0 0 9 9"><path d="M4.5 0.5 V8.5 M1 2.5 L8 6.5 M8 2.5 L1 6.5" stroke="#f01818" stroke-width="1.6"/></svg>
<div class="t" style="left:414px;top:856px;">手术间</div>
<div style="left:477px;top:853px;width:130px;height:28px;background:#fff;border:1px solid #a5a5a5"></div>
<div class="t" style="left:480px;top:857px;">第二间</div>
<div style="left:583px;top:855px;width:22px;height:24px;background:#a2bdf0"></div>
<div style="left:588px;top:864px;width:12px;height:7px;"><div class="tri"></div></div>
<svg style="position:absolute;left:612px;top:862px" width="9" height="9" viewBox="0 0 9 9"><path d="M4.5 0.5 V8.5 M1 2.5 L8 6.5 M8 2.5 L1 6.5" stroke="#f01818" stroke-width="1.6"/></svg>
<div class="t" style="left:625px;top:856px;">手术台次</div>
<div style="left:707px;top:853px;width:86px;height:28px;background:#fff;border:1px solid #a5a5a5"></div>
<div class="t" style="left:710px;top:857px;"><b class="m" style="width:10.50px"><i style="transform:scaleX(0.795)">1</i></b></div>
<div style="left:769px;top:855px;width:22px;height:11px;background:#a2bdf0"></div>
<div style="left:769px;top:867px;width:22px;height:11px;background:#a2bdf0"></div>
<svg style="position:absolute;left:769px;top:855px" width="22" height="24"><path d="M7 8 L11 3 L15 8Z" fill="#000"/><path d="M7 16 L11 21 L15 16Z" fill="#000"/></svg>
<svg style="position:absolute;left:802px;top:862px" width="9" height="9" viewBox="0 0 9 9"><path d="M4.5 0.5 V8.5 M1 2.5 L8 6.5 M8 2.5 L1 6.5" stroke="#f01818" stroke-width="1.6"/></svg>
<div class="t" style="left:816px;top:856px;">麻醉科室</div>
<div style="left:896px;top:853px;width:154px;height:28px;background:#fff;border:1px solid #a5a5a5"></div>
<div class="t" style="left:899px;top:857px;">门麻醉科</div>
<div style="left:1026px;top:855px;width:22px;height:24px;background:#a2bdf0"></div>
<div style="left:1031px;top:864px;width:12px;height:7px;"><div class="tri"></div></div>
<svg style="position:absolute;left:21px;top:897px" width="9" height="9" viewBox="0 0 9 9"><path d="M4.5 0.5 V8.5 M1 2.5 L8 6.5 M8 2.5 L1 6.5" stroke="#f01818" stroke-width="1.6"/></svg>
<div class="t" style="left:34px;top:891px;">手术开始时间</div>
<div style="left:155px;top:889px;width:138px;height:27px;background:#fff;border:1px solid #a5a5a5"></div>
<div class="t" style="left:158px;top:892px;"><b class="m" style="width:105.00px"><i style="transform:scaleX(0.795)">2020-12-14</i></b></div>
<div style="left:269px;top:891px;width:22px;height:23px;background:#a2bdf0"></div>
<div style="left:274px;top:900px;width:12px;height:7px;"><div class="tri"></div></div>
<div style="left:293px;top:889px;width:86px;height:27px;background:#fff;border:1px solid #a5a5a5"></div>
<div class="t" style="left:296px;top:892px;"><b class="m" style="width:52.50px"><i style="transform:scaleX(0.795)">10:00</i></b></div>
<div style="left:355px;top:891px;width:22px;height:11px;background:#a2bdf0"></div>
<div style="left:355px;top:903px;width:22px;height:11px;background:#a2bdf0"></div>
<svg style="position:absolute;left:355px;top:891px" width="22" height="23"><path d="M7 8 L11 3 L15 8Z" fill="#000"/><path d="M7 16 L11 21 L15 16Z" fill="#000"/></svg>
<div class="t" style="left:395px;top:891px;">手术分类</div>
<div style="left:477px;top:889px;width:130px;height:28px;background:#fff;border:1px solid #a5a5a5"></div>
<div style="left:583px;top:891px;width:22px;height:24px;background:#a2bdf0"></div>
<div style="left:588px;top:900px;width:12px;height:7px;"><div class="tri"></div></div>
<svg style="position:absolute;left:612px;top:897px" width="9" height="9" viewBox="0 0 9 9"><path d="M4.5 0.5 V8.5 M1 2.5 L8 6.5 M8 2.5 L1 6.5" stroke="#f01818" stroke-width="1.6"/></svg>
<div class="t" style="left:625px;top:891px;">手术类型</div>
<div style="left:707px;top:889px;width:86px;height:28px;background:#fff;border:1px solid #a5a5a5"></div>
<div class="t" style="left:710px;top:893px;">择期</div>
<div style="left:769px;top:891px;width:22px;height:24px;background:#a2bdf0"></div>
<div style="left:774px;top:900px;width:12px;height:7px;"><div class="tri"></div></div>
<svg style="position:absolute;left:802px;top:897px" width="9" height="9" viewBox="0 0 9 9"><path d="M4.5 0.5 V8.5 M1 2.5 L8 6.5 M8 2.5 L1 6.5" stroke="#f01818" stroke-width="1.6"/></svg>
<div class="t" style="left:816px;top:891px;">手术医生</div>
<div style="left:896px;top:889px;width:154px;height:30px;background:#d2f2f2;border-top:2px solid #7c7c7c;border-left:2px solid #7c7c7c;border-bottom:1px solid #e8e8e8;border-right:1px solid #e8e8e8"></div>
<div class="t" style="left:900px;top:893px;">陈国良<b class="m" style="width:52.50px"><i style="transform:scaleX(0.795)">/Ncgl</i></b></div>
<div class="t" style="left:34px;top:926px;">手术结束时间</div>
<div style="left:155px;top:924px;width:138px;height:27px;background:#fff;border:1px solid #a5a5a5"></div>
<div style="left:269px;top:926px;width:22px;height:23px;background:#a2bdf0"></div>
<div style="left:274px;top:935px;width:12px;height:7px;"><div class="tri"></div></div>
<div style="left:293px;top:924px;width:86px;height:27px;background:#fff;border:1px solid #a5a5a5"></div>
<div class="t" style="left:296px;top:927px;"><b class="m" style="width:52.50px"><i style="transform:scaleX(0.795)">00:00</i></b></div>
<div style="left:355px;top:926px;width:22px;height:11px;background:#a2bdf0"></div>
<div style="left:355px;top:938px;width:22px;height:11px;background:#a2bdf0"></div>
<svg style="position:absolute;left:355px;top:926px" width="22" height="23"><path d="M7 8 L11 3 L15 8Z" fill="#000"/><path d="M7 16 L11 21 L15 16Z" fill="#000"/></svg>
<div class="t" style="left:395px;top:926px;">手术等级</div>
<div style="left:477px;top:924px;width:130px;height:28px;background:#fff;border:1px solid #a5a5a5"></div>
<div class="t" style="left:480px;top:928px;">中</div>
<div style="left:583px;top:926px;width:22px;height:24px;background:#a2bdf0"></div>
<div style="left:588px;top:935px;width:12px;height:7px;"><div class="tri"></div></div>
<div class="t" style="left:626px;top:926px;">隔离标志</div>
<div style="left:707px;top:924px;width:86px;height:28px;background:#fff;border:1px solid #a5a5a5"></div>
<div style="left:769px;top:926px;width:22px;height:24px;background:#a2bdf0"></div>
<div style="left:774px;top:935px;width:12px;height:7px;"><div class="tri"></div></div>
<div class="t" style="left:816px;top:926px;">切口等级</div>
<div style="left:896px;top:924px;width:154px;height:28px;background:#fff;border:1px solid #a5a5a5"></div>
<div class="t" style="left:899px;top:928px;"><b class="m" style="width:21.00px"><i style="transform:scaleX(0.795)">II</i></b></div>
<div style="left:1026px;top:926px;width:22px;height:24px;background:#a2bdf0"></div>
<div style="left:1031px;top:935px;width:12px;height:7px;"><div class="tri"></div></div>
<div class="t" style="left:34px;top:962px;">输血医生</div>
<div style="left:117px;top:957px;width:134px;height:31px;background:#d2f2f2;border-top:2px solid #7c7c7c;border-left:2px solid #7c7c7c;border-bottom:1px solid #e8e8e8;border-right:1px solid #e8e8e8"></div>
<div class="t" style="left:271px;top:962px;">术前病情</div>
<div style="left:354px;top:960px;width:699px;height:27px;background:#fff;border:1px solid #a8a8a8"></div>
<div class="t" style="left:34px;top:997px;">是否顺利</div>
<div style="left:117px;top:994px;width:139px;height:28px;background:#fff;border:1px solid #a5a5a5"></div>
<div style="left:232px;top:996px;width:22px;height:24px;background:#a2bdf0"></div>
<div style="left:237px;top:1005px;width:12px;height:7px;"><div class="tri"></div></div>
<div class="t" style="left:271px;top:997px;">术后诊断</div>
<div style="left:354px;top:993px;width:699px;height:28px;background:#fff;border:1px solid #a8a8a8"></div>
<div class="t" style="left:23px;top:1035px;">手术助手<b class="m" style="width:10.50px"><i style="transform:scaleX(0.795)">1</i></b></div>
<div style="left:117px;top:1028px;width:133px;height:31px;background:#d2f2f2;border-top:2px solid #7c7c7c;border-left:2px solid #7c7c7c;border-bottom:1px solid #e8e8e8;border-right:1px solid #e8e8e8"></div>
<div class="t" style="left:260px;top:1035px;">巡回护士<b class="m" style="width:10.50px"><i style="transform:scaleX(0.795)">1</i></b></div>
<div style="left:354px;top:1028px;width:133px;height:31px;background:#d2f2f2;border-top:2px solid #7c7c7c;border-left:2px solid #7c7c7c;border-bottom:1px solid #e8e8e8;border-right:1px solid #e8e8e8"></div>
<div class="t" style="left:23px;top:1070px;">手术助手<b class="m" style="width:10.50px"><i style="transform:scaleX(0.795)">2</i></b></div>
<div style="left:117px;top:1063px;width:133px;height:31px;background:#d2f2f2;border-top:2px solid #7c7c7c;border-left:2px solid #7c7c7c;border-bottom:1px solid #e8e8e8;border-right:1px solid #e8e8e8"></div>
<div class="t" style="left:260px;top:1070px;">巡回护士<b class="m" style="width:10.50px"><i style="transform:scaleX(0.795)">2</i></b></div>
<div style="left:354px;top:1063px;width:133px;height:31px;background:#d2f2f2;border-top:2px solid #7c7c7c;border-left:2px solid #7c7c7c;border-bottom:1px solid #e8e8e8;border-right:1px solid #e8e8e8"></div>
<div class="t" style="left:23px;top:1105px;">手术助手<b class="m" style="width:10.50px"><i style="transform:scaleX(0.795)">3</i></b></div>
<div style="left:117px;top:1098px;width:133px;height:31px;background:#d2f2f2;border-top:2px solid #7c7c7c;border-left:2px solid #7c7c7c;border-bottom:1px solid #e8e8e8;border-right:1px solid #e8e8e8"></div>
<div class="t" style="left:260px;top:1105px;">台上护士<b class="m" style="width:10.50px"><i style="transform:scaleX(0.795)">1</i></b></div>
<div style="left:354px;top:1098px;width:133px;height:31px;background:#d2f2f2;border-top:2px solid #7c7c7c;border-left:2px solid #7c7c7c;border-bottom:1px solid #e8e8e8;border-right:1px solid #e8e8e8"></div>
<div class="t" style="left:23px;top:1141px;">手术助手<b class="m" style="width:10.50px"><i style="transform:scaleX(0.795)">4</i></b></div>
<div style="left:117px;top:1134px;width:133px;height:31px;background:#d2f2f2;border-top:2px solid #7c7c7c;border-left:2px solid #7c7c7c;border-bottom:1px solid #e8e8e8;border-right:1px solid #e8e8e8"></div>
<div class="t" style="left:260px;top:1141px;">台上护士<b class="m" style="width:10.50px"><i style="transform:scaleX(0.795)">2</i></b></div>
<div style="left:354px;top:1134px;width:133px;height:31px;background:#d2f2f2;border-top:2px solid #7c7c7c;border-left:2px solid #7c7c7c;border-bottom:1px solid #e8e8e8;border-right:1px solid #e8e8e8"></div>
<div class="t" style="left:23px;top:1179px;">洗手护士<b class="m" style="width:10.50px"><i style="transform:scaleX(0.795)">1</i></b></div>
<div style="left:117px;top:1172px;width:133px;height:31px;background:#d2f2f2;border-top:2px solid #7c7c7c;border-left:2px solid #7c7c7c;border-bottom:1px solid #e8e8e8;border-right:1px solid #e8e8e8"></div>
<div class="t" style="left:260px;top:1179px;">洗手护士<b class="m" style="width:10.50px"><i style="transform:scaleX(0.795)">2</i></b></div>
<div style="left:354px;top:1172px;width:133px;height:31px;background:#d2f2f2;border-top:2px solid #7c7c7c;border-left:2px solid #7c7c7c;border-bottom:1px solid #e8e8e8;border-right:1px solid #e8e8e8"></div>
<div class="t" style="left:497px;top:1032px;">术前诊断</div>
<div style="left:580px;top:1028px;width:473px;height:27px;background:#fff;border:1px solid #a8a8a8"></div>
<div class="t" style="left:584px;top:1031px;">股骨骨折不连接</div>
<div class="t" style="left:497px;top:1070px;">副手术名称<b class="m" style="width:10.50px"><i style="transform:scaleX(0.795)">1</i></b></div>
<div style="left:610px;top:1062px;width:242px;height:30px;background:#d2f2f2;border-top:2px solid #7c7c7c;border-left:2px solid #7c7c7c;border-bottom:1px solid #e8e8e8;border-right:1px solid #e8e8e8"></div>
<div class="t" style="left:857px;top:1070px;">总出量</div>
<div style="left:920px;top:1064px;width:109px;height:27px;background:#fff;border:1px solid #a5a5a5"></div>
<div style="left:1005px;top:1066px;width:22px;height:11px;background:#a2bdf0"></div>
<div style="left:1005px;top:1078px;width:22px;height:11px;background:#a2bdf0"></div>
<svg style="position:absolute;left:1005px;top:1066px" width="22" height="23"><path d="M7 8 L11 3 L15 8Z" fill="#000"/><path d="M7 16 L11 21 L15 16Z" fill="#000"/></svg>
<div class="t" style="left:1033px;top:1069px;"><b class="m" style="width:21.00px"><i style="transform:scaleX(0.795)">ml</i></b></div>
<div class="t" style="left:497px;top:1106px;">副手术名称<b class="m" style="width:10.50px"><i style="transform:scaleX(0.795)">2</i></b></div>
<div style="left:610px;top:1098px;width:242px;height:30px;background:#d2f2f2;border-top:2px solid #7c7c7c;border-left:2px solid #7c7c7c;border-bottom:1px solid #e8e8e8;border-right:1px solid #e8e8e8"></div>
<div class="t" style="left:857px;top:1106px;">总入量</div>
<div style="left:920px;top:1100px;width:109px;height:27px;background:#fff;border:1px solid #a5a5a5"></div>
<div style="left:1005px;top:1102px;width:22px;height:11px;background:#a2bdf0"></div>
<div style="left:1005px;top:1114px;width:22px;height:11px;background:#a2bdf0"></div>
<svg style="position:absolute;left:1005px;top:1102px" width="22" height="23"><path d="M7 8 L11 3 L15 8Z" fill="#000"/><path d="M7 16 L11 21 L15 16Z" fill="#000"/></svg>
<div class="t" style="left:1033px;top:1105px;"><b class="m" style="width:21.00px"><i style="transform:scaleX(0.795)">ml</i></b></div>
<div class="t" style="left:497px;top:1142px;">副手术名称<b class="m" style="width:10.50px"><i style="transform:scaleX(0.795)">3</i></b></div>
<div style="left:610px;top:1134px;width:242px;height:30px;background:#d2f2f2;border-top:2px solid #7c7c7c;border-left:2px solid #7c7c7c;border-bottom:1px solid #e8e8e8;border-right:1px solid #e8e8e8"></div>
<div class="t" style="left:857px;top:1142px;">出血量</div>
<div style="left:920px;top:1136px;width:109px;height:27px;background:#fff;border:1px solid #a5a5a5"></div>
<div style="left:1005px;top:1138px;width:22px;height:11px;background:#a2bdf0"></div>
<div style="left:1005px;top:1150px;width:22px;height:11px;background:#a2bdf0"></div>
<svg style="position:absolute;left:1005px;top:1138px" width="22" height="23"><path d="M7 8 L11 3 L15 8Z" fill="#000"/><path d="M7 16 L11 21 L15 16Z" fill="#000"/></svg>
<div class="t" style="left:1033px;top:1141px;"><b class="m" style="width:21.00px"><i style="transform:scaleX(0.795)">ml</i></b></div>
<div class="t" style="left:497px;top:1178px;">副手术名称<b class="m" style="width:10.50px"><i style="transform:scaleX(0.795)">4</i></b></div>
<div style="left:610px;top:1170px;width:242px;height:30px;background:#d2f2f2;border-top:2px solid #7c7c7c;border-left:2px solid #7c7c7c;border-bottom:1px solid #e8e8e8;border-right:1px solid #e8e8e8"></div>
<div class="t" style="left:857px;top:1178px;">输血量</div>
<div style="left:920px;top:1172px;width:109px;height:27px;background:#fff;border:1px solid #a5a5a5"></div>
<div style="left:1005px;top:1174px;width:22px;height:11px;background:#a2bdf0"></div>
<div style="left:1005px;top:1186px;width:22px;height:11px;background:#a2bdf0"></div>
<svg style="position:absolute;left:1005px;top:1174px" width="22" height="23"><path d="M7 8 L11 3 L15 8Z" fill="#000"/><path d="M7 16 L11 21 L15 16Z" fill="#000"/></svg>
<div class="t" style="left:1033px;top:1177px;"><b class="m" style="width:21.00px"><i style="transform:scaleX(0.795)">ml</i></b></div>
<div class="t" style="left:23px;top:1215px;">手术风险等级</div>
<div style="left:141px;top:1211px;width:138px;height:28px;background:#fff;border:1px solid #a5a5a5"></div>
<div style="left:255px;top:1213px;width:22px;height:24px;background:#a2bdf0"></div>
<div style="left:260px;top:1222px;width:12px;height:7px;"><div class="tri"></div></div>
<div class="t" style="left:304px;top:1215px;">手术进行状态</div>
<div style="left:424px;top:1211px;width:177px;height:28px;background:#fff;border:1px solid #a5a5a5"></div>
<div style="left:577px;top:1213px;width:22px;height:24px;background:#a2bdf0"></div>
<div style="left:582px;top:1222px;width:12px;height:7px;"><div class="tri"></div></div>
<div style="left:615px;top:1209px;width:132px;height:30px;background:#e1e1e1;border:1px solid #adadad"></div>
<div class="t" style="left:617px;top:1214px;"></div>
<div class="y" style="left:617px;top:1213px;font-size:18.3px;letter-spacing:0.2px">-&gt;状态直接保存</div>
<div class="t" style="left:69px;top:1249px;">备注</div>
<div style="left:119px;top:1248px;width:934px;height:71px;background:#fff;border-top:2px solid #7c7c7c;border-left:2px solid #7c7c7c;border-bottom:1px solid #e8e8e8;border-right:1px solid #e8e8e8"></div>
<div style="left:1026px;top:1250px;width:25px;height:68px;background:#f0f0f0"></div>
<svg style="position:absolute;left:1030px;top:1255px" width="16" height="60"><path d="M3 10 L8 5 L13 10" fill="none" stroke="#b0b0b0" stroke-width="1.8"/><path d="M3 45 L8 50 L13 45" fill="none" stroke="#b0b0b0" stroke-width="1.8"/></svg>
<div class="y" style="left:1080px;top:820px;font-size:21px;letter-spacing:0.9px;color:#f03c3c;line-height:26px">点击<span style="display:inline-block;width:21.9px;text-align:right">‘</span>术后登记<span style="display:inline-block;width:21.9px;text-align:left">’</span>时，若时间早于手术开始时间，可以设置提示，</div>
<div class="y" style="left:1080px;top:851px;font-size:21px;letter-spacing:0.9px;color:#f03c3c;line-height:26px">比如<span style="display:inline-block;width:21.9px;text-align:right">‘</span>术后登记时间早于手术开始时间，是否登记<span style="display:inline-block;width:21.9px;text-align:left">’</span></div>
<div style="left:3px;top:107px;width:154px;height:52px;border:3px solid #f03a3a"></div>
<div style="left:15px;top:880px;width:368px;height:48px;border:3px solid #f03a3a"></div>
<div style="left:1997px;top:856px;width:146px;height:51px;border:3px solid #f03a3a"></div>
<svg style="position:absolute;left:0;top:0" width="2157" height="1331"><defs><linearGradient id="lg" gradientUnits="userSpaceOnUse" x1="390" y1="0" x2="1975" y2="0"><stop offset="0" stop-color="#f03a3a" stop-opacity="1"/><stop offset="0.6" stop-color="#f03a3a" stop-opacity="1"/><stop offset="1" stop-color="#f03a3a" stop-opacity="0.25"/></linearGradient></defs><path d="M392 908.5 L1972 882" stroke="url(#lg)" stroke-width="1.8" fill="none"/><path d="M384 909 L396 903.5 L396 914Z" fill="#f03a3a"/></svg></body></html>
